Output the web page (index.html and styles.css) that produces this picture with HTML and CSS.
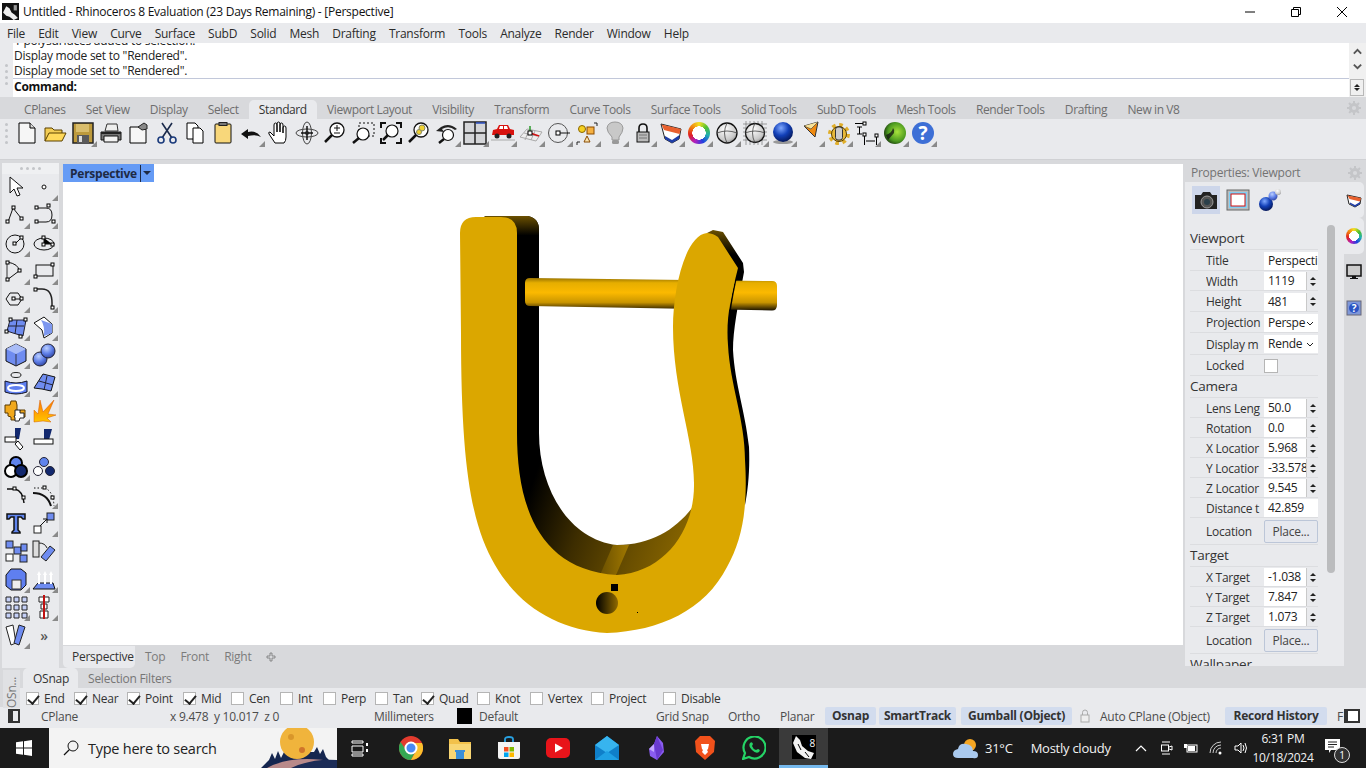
FILE: index.html
```html
<!DOCTYPE html>
<html lang="en">
  <head>
    <meta charset="UTF-8" />
    <title>Untitled - Rhinoceros 8</title>
    <link rel="stylesheet" href="styles.css">
  </head>
  <body>
    <svg class="defs">
      <defs>
        <linearGradient id="gPin" x1="0" y1="0" x2="0" y2="1">
          <stop offset="0" stop-color="#9a7400"/><stop offset=".15" stop-color="#e6ae00"/><stop offset=".45" stop-color="#fbb900"/><stop offset=".75" stop-color="#c99500"/><stop offset="1" stop-color="#1a1200"/>
        </linearGradient>
        <linearGradient id="gBack" gradientUnits="userSpaceOnUse" x1="530" y1="490" x2="690" y2="545">
          <stop offset="0" stop-color="#000"/><stop offset=".35" stop-color="#3d2d00"/><stop offset=".7" stop-color="#6a4f00"/><stop offset="1" stop-color="#8a6700"/>
        </linearGradient>
        <linearGradient id="gTop" x1="0" y1="0" x2="0" y2="1">
          <stop offset="0" stop-color="#6b5000"/><stop offset=".09" stop-color="#000"/><stop offset="1" stop-color="#000"/>
        </linearGradient>
        <linearGradient id="gHole" x1="0" y1="0" x2="1" y2="0">
          <stop offset="0" stop-color="#000"/><stop offset="1" stop-color="#8f6a00"/>
        </linearGradient>
        <linearGradient id="gStrip" x1="0" y1="0" x2="1" y2="0">
          <stop offset="0" stop-color="#6b5000"/><stop offset="1" stop-color="#a07800"/>
        </linearGradient>
        <radialGradient id="gBlue" cx=".4" cy=".3" r=".8">
          <stop offset="0" stop-color="#bcd0ff"/><stop offset=".5" stop-color="#5f7fe8"/><stop offset="1" stop-color="#26388f"/>
        </radialGradient>
        <radialGradient id="gGrey" cx=".4" cy=".3" r=".8">
          <stop offset="0" stop-color="#fff"/><stop offset=".7" stop-color="#c8c8c8"/><stop offset="1" stop-color="#777"/>
        </radialGradient>
        <radialGradient id="gDeep" cx=".4" cy=".3" r=".75">
          <stop offset="0" stop-color="#7fa8ff"/><stop offset=".5" stop-color="#1240b8"/><stop offset="1" stop-color="#04134f"/>
        </radialGradient>
        <radialGradient id="gGreen" cx=".6" cy=".45" r=".7">
          <stop offset="0" stop-color="#a8e23c"/><stop offset=".6" stop-color="#4c9a20"/><stop offset="1" stop-color="#0a1a08"/>
        </radialGradient>
        <linearGradient id="gFire" x1="0" y1="0" x2="0" y2="1">
          <stop offset="0" stop-color="#ff7a00"/><stop offset="1" stop-color="#ffc400"/>
        </linearGradient>
      </defs>
    </svg>

    <header class="titlebar">
      <svg class="app-icon" viewBox="0 0 16 16"><rect width="16" height="16" fill="#111"/><path d="M1 9l3-6 3 2 2 4 3 2 3 3-4 2-4-3-3-1z" fill="#eee"/><path d="M11 2h3v5h-3z" fill="#999"/></svg>
      <span class="title-text">Untitled - Rhinoceros 8 Evaluation (23 Days Remaining) - [Perspective]</span>
      <div class="win-btns">
        <svg viewBox="0 0 12 12"><path d="M1 6h10" stroke="#000"/></svg>
        <svg viewBox="0 0 12 12"><path d="M1.5 3.5h7v7h-7zM3.5 3.5v-2h7v7h-2" fill="none" stroke="#000"/></svg>
        <svg viewBox="0 0 12 12"><path d="M1 1l10 10M11 1L1 11" stroke="#000"/></svg>
      </div>
    </header>

    <nav class="menubar">
      <span>File</span><span>Edit</span><span>View</span><span>Curve</span><span>Surface</span><span>SubD</span><span>Solid</span><span>Mesh</span><span>Drafting</span><span>Transform</span><span>Tools</span><span>Analyze</span><span>Render</span><span>Window</span><span>Help</span>
    </nav>

    <section class="command">
      <div class="grip-v"><i></i><i></i><i></i><i></i></div>
      <div class="command-main">
        <div class="history">
          <p>1 polysurfaces added to selection.</p>
          <p>Display mode set to "Rendered".</p>
          <p>Display mode set to "Rendered".</p>
        </div>
        <div class="prompt">Command:</div>
      </div>
      <div class="command-scroll">
        <div class="scroll-up">
          <svg viewBox="0 0 12 30"><path d="M2 8l4-4 4 4M2 20l4 4 4-4" fill="none" stroke="#555" stroke-width="2"/></svg>
        </div>
        <div class="mini-spin"><i class="up"></i><i class="down"></i></div>
      </div>
    </section>

    <div class="tabrow">
      <span>CPlanes</span><span>Set View</span><span>Display</span><span>Select</span><span class="active">Standard</span><span>Viewport Layout</span><span>Visibility</span><span>Transform</span><span>Curve Tools</span><span>Surface Tools</span><span>Solid Tools</span><span>SubD Tools</span><span>Mesh Tools</span><span>Render Tools</span><span>Drafting</span><span>New in V8</span>
      <svg class="gear" viewBox="0 0 14 14"><circle cx="7" cy="7" r="3.6" fill="none" stroke="#c4c5c8" stroke-width="3"/><path d="M7 0v14M0 7h14M2 2l10 10M12 2L2 12" stroke="#c4c5c8" stroke-width="2" stroke-dasharray="2.4 9.2"/></svg>
    </div>

    <div class="toolbar">
      <div class="grip-v tool-grip"><i></i><i></i><i></i><i></i></div>
      <div class="tool"><svg viewBox="0 0 24 24"><path d="M4 2h11l5 5v15H4z" fill="#f6f6f6" stroke="#000"/><path d="M15 2v5h5" fill="#ddd" stroke="#000"/></svg></div>
      <div class="tool"><svg viewBox="0 0 24 24"><path d="M2 20V7h7l2 2h8v3" fill="#f3cd55" stroke="#5a4100"/><path d="M2 20l4-8h17l-4 8z" fill="#ffd95a" stroke="#5a4100"/></svg></div>
      <div class="tool fly"><svg viewBox="0 0 24 24"><path d="M2 2h20v20H2z" fill="#bd9a3c" stroke="#222" stroke-width="1.5"/><rect x="5" y="3" width="13" height="8" fill="#d9bd6c"/><rect x="6" y="14" width="12" height="8" fill="#5a5a5a"/><rect x="8" y="15" width="3" height="6" fill="#ddd"/></svg></div>
      <div class="tool"><svg viewBox="0 0 24 24"><path d="M6 10l2-7h10l1 7z" fill="#eee" stroke="#333"/><path d="M2 11h20v8H2z" fill="#777" stroke="#111"/><path d="M5 15h14v6H5z" fill="#f2f2f2" stroke="#111"/><path d="M2 12h20" stroke="#222" stroke-width="2"/></svg></div>
      <div class="tool"><svg viewBox="0 0 24 24"><path d="M3 6h13l3 3v13H3z" fill="#f6f6f6" stroke="#000"/><path d="M11 6l6-4 3 2v4l-5 1z" fill="#888" stroke="#222"/></svg></div>
      <div class="tool"><svg viewBox="0 0 24 24"><path d="M7 2l10 15M17 2L7 17" stroke="#1b2b4c" stroke-width="1.6"/><circle cx="6" cy="19" r="3" fill="none" stroke="#1b3b7c" stroke-width="1.6"/><circle cx="18" cy="19" r="3" fill="none" stroke="#1b3b7c" stroke-width="1.6"/></svg></div>
      <div class="tool"><svg viewBox="0 0 24 24"><path d="M4 2h8l3 3v13H4z" fill="#fff" stroke="#000"/><path d="M10 7h7l3 3v12H10z" fill="#fff" stroke="#000"/></svg></div>
      <div class="tool"><svg viewBox="0 0 24 24"><path d="M5 3h14q1 0 1 1v17q0 1-1 1H5q-1 0-1-1V4q0-1 1-1z" fill="#f8d77a" stroke="#111"/><rect x="8" y="1.5" width="8" height="3" fill="#777" stroke="#222"/></svg></div>
      <div class="tool fly"><svg viewBox="0 0 24 24"><path d="M2 13l7-5v3q8-2 13 5q-5-3-13-1v3z" fill="#111"/></svg></div>
      <div class="tool"><svg viewBox="0 0 24 24"><path d="M8 22l-6-9q-1-2 1-2l4 4V4q0-2 1.5-2T10 4v7-8q0-2 1.5-2T13 3v8-7q0-2 1.5-2T16 4v8-5q0-2 1.5-2T19 7v9q0 4-2 6z" fill="#fff" stroke="#000"/></svg></div>
      <div class="tool"><svg viewBox="0 0 24 24"><ellipse cx="12" cy="12" rx="11" ry="4" fill="none" stroke="#444"/><ellipse cx="12" cy="12" rx="4.5" ry="11" fill="none" stroke="#444"/><path d="M12 5v14M6 12h12" stroke="#111" stroke-width="1.5"/><circle cx="12" cy="12" r="2" fill="#222"/></svg></div>
      <div class="tool"><svg viewBox="0 0 24 24"><circle cx="14" cy="9" r="7" fill="#fff" stroke="#111" stroke-width="1.3"/><path d="M9 14l-7 7" stroke="#111" stroke-width="2.5"/><path d="M11 7h6M14 4v6M11 12h6" stroke="#111"/></svg></div>
      <div class="tool"><svg viewBox="0 0 24 24"><rect x="8" y="2" width="15" height="13" fill="none" stroke="#111" stroke-dasharray="2 2"/><circle cx="12" cy="13" r="6" fill="#fff" stroke="#111" stroke-width="1.2"/><path d="M8 17l-6 5" stroke="#111" stroke-width="2.5"/></svg></div>
      <div class="tool"><svg viewBox="0 0 24 24"><path d="M2 7V2h5M17 2h5v5M22 17v5h-5M7 22H2v-5" fill="none" stroke="#111" stroke-width="2"/><circle cx="13" cy="10" r="6" fill="#fff" stroke="#111" stroke-width="1.2"/><path d="M9 14l-5 5" stroke="#111" stroke-width="2.5"/></svg></div>
      <div class="tool"><svg viewBox="0 0 24 24"><circle cx="14" cy="9" r="7" fill="#fff" stroke="#111" stroke-width="1.3"/><circle cx="15" cy="7" r="3" fill="#f0d230" stroke="#886"/><circle cx="12" cy="11" r="2.5" fill="#f0d230" stroke="#886"/><path d="M9 14l-7 7" stroke="#111" stroke-width="2.5"/></svg></div>
      <div class="tool fly"><svg viewBox="0 0 24 24"><path d="M1 10l5-4q8-5 16 2l-2 1q-6-5-13-1l2 3z" fill="#222"/><circle cx="13" cy="14" r="5.5" fill="#fff" stroke="#111" stroke-width="1.2"/><path d="M9 18l-5 4" stroke="#111" stroke-width="2.5"/></svg></div>
      <div class="tool fly"><svg viewBox="0 0 24 24"><rect x="1" y="1" width="22" height="22" fill="#d4d5d8" stroke="#222" stroke-width="1.5"/><path d="M1 12h22M12 1v22" stroke="#222" stroke-width="1.5"/><path d="M13 2h9" stroke="#2a4cc0" stroke-width="1.5"/></svg></div>
      <div class="tool fly"><svg viewBox="0 0 24 24"><path d="M1 14l1-5 4-1 2-4h9l2 4 4 1v5z" fill="#d8120e"/><path d="M9 5h3v3H8zM13 5h3l1 3h-4z" fill="#fff"/><circle cx="6" cy="15" r="2.5" fill="#222"/><circle cx="18" cy="15" r="2.5" fill="#222"/><path d="M0 19h24" stroke="#aaa"/></svg></div>
      <div class="tool fly"><svg viewBox="0 0 24 24"><path d="M1 16L8 8l15 3-6 9z" fill="#eee" stroke="#aaa"/><path d="M5 12l13 3M10 9l-4 10M16 10l-4 9" stroke="#aaa"/><path d="M11 12V5" stroke="#2a9a2a" stroke-width="1.5"/><path d="M11 12l9 3" stroke="#d01010" stroke-width="1.5"/><rect x="9" y="10" width="4" height="4" fill="#fff" stroke="#000"/></svg></div>
      <div class="tool fly"><svg viewBox="0 0 24 24"><circle cx="11" cy="12" r="9.5" fill="none" stroke="#555"/><path d="M12 12h11" stroke="#111"/><rect x="9" y="10" width="4" height="4" fill="#fff" stroke="#000"/></svg></div>
      <div class="tool fly"><svg viewBox="0 0 24 24"><circle cx="7" cy="8" r="3.5" fill="#f5d020" stroke="#8a6500"/><rect x="12" y="6" width="7" height="7" fill="#f5b040" stroke="#8a4a00"/><path d="M9 21l3-6 3 6z" fill="#f9e3b0" stroke="#8a4a00"/><path d="M19 2h3v3M2 24v-3h3" fill="none" stroke="#222"/></svg></div>
      <div class="tool fly"><svg viewBox="0 0 24 24"><path d="M12 1q7 0 8 6 0 4-4 9v3H9v-3Q4 11 4 7q1-6 8-6z" fill="#c8c8c8" stroke="#999"/><rect x="9" y="19" width="7" height="4" rx="1.5" fill="#999"/></svg></div>
      <div class="tool fly"><svg viewBox="0 0 24 24"><path d="M8 11V7q0-4 4-4t4 4v4" fill="none" stroke="#111" stroke-width="1.6"/><rect x="6" y="11" width="12" height="10" fill="#bbb" stroke="#111"/><path d="M8 14h8M8 17h8" stroke="#777"/></svg></div>
      <div class="tool fly"><svg viewBox="0 0 24 24"><path d="M2 3l20 5-2 10-7 4-7-4z" fill="#fff" stroke="#222"/><path d="M2.500 3.500L22 8l-1.500 5L5 9z" fill="#e8602e"/><path d="M6 15l7 4 7.500-5-.5 4-7 4-7-4z" fill="#1f3ea8"/></svg></div>
      <div class="tool fly"><span class="wheel"></span></div>
      <div class="tool fly"><svg viewBox="0 0 24 24"><circle cx="12" cy="12" r="10" fill="url(#gGrey)" stroke="#111" stroke-width="1.3"/><path d="M12 2q-5 10 0 20M2 12q10-4 20 0" fill="none" stroke="#444" stroke-width=".8"/></svg></div>
      <div class="tool fly"><svg viewBox="0 0 24 24"><path d="M0 3h24M0 7h24M0 11h24M0 15h24M0 19h24M3 0v24M7 0v24M11 0v24M15 0v24M19 0v24" stroke="#666" stroke-width=".6"/><circle cx="12" cy="12" r="9.5" fill="url(#gGrey)" stroke="#111" stroke-width="1.3"/><path d="M12 2q-5 10 0 20M2 12q10-4 20 0" fill="none" stroke="#444" stroke-width=".8"/></svg></div>
      <div class="tool fly"><svg viewBox="0 0 24 24"><ellipse cx="12" cy="21" rx="10" ry="2" fill="#999"/><circle cx="12" cy="11" r="10" fill="url(#gDeep)"/></svg></div>
      <div class="tool fly"><svg viewBox="0 0 24 24"><path d="M5 5l14-4-3 15z" fill="#f08a10" stroke="#333"/><path d="M5 5l7 3 7-7" fill="#f7e39a" stroke="#333" stroke-width=".6"/></svg></div>
      <div class="tool fly"><svg viewBox="0 0 24 24"><circle cx="12" cy="13" r="9" fill="none" stroke="#e0ae2a" stroke-width="4" stroke-dasharray="3.500 3.560"/><circle cx="12" cy="13" r="7.500" fill="#e8b93a" stroke="#5a4100"/><rect x="8.500" y="6" width="7" height="13" rx="2.500" fill="#ccc" stroke="#333"/></svg></div>
      <div class="tool fly"><svg viewBox="0 0 24 24"><rect x="8" y="1" width="3" height="3" fill="#fff" stroke="#000"/><path d="M0 2.5h8M2 6h5M4.5 6v7M2 13h5" stroke="#000"/><rect x="8" y="12" width="3" height="3" fill="#fff" stroke="#000"/><rect x="20" y="13" width="3" height="3" fill="#fff" stroke="#000"/><path d="M9.500 15v9M21.500 16v8M11 20h9" stroke="#000"/></svg></div>
      <div class="tool fly"><svg viewBox="0 0 24 24"><circle cx="12" cy="12" r="11" fill="url(#gGreen)"/><path d="M3 14q6-2 7-7 2 2 1 5l-6 7z" fill="#111" opacity=".75"/></svg></div>
      <div class="tool fly"><svg viewBox="0 0 24 24"><circle cx="12" cy="12" r="11" fill="#3d6fd6"/><text x="12" y="19" class="help-q">?</text></svg></div>
    </div>

    <main class="main">
      <aside class="lefttools">
        <div class="grip-h"><i></i><i></i><i></i><i></i></div>
        <div class="left-grid">
          <div class="tool"><svg viewBox="0 0 24 24"><path d="M6 2v16l4-4 3 7 3-1-3-7h6z" fill="#fff" stroke="#111"/></svg></div>
          <div class="tool fly"><svg viewBox="0 0 24 24"><circle cx="12" cy="12" r="2" fill="#fff" stroke="#111"/></svg></div>
          <div class="tool fly"><svg viewBox="0 0 24 24"><path d="M4 19L9 5l8 10" fill="none" stroke="#111"/><rect x="2" y="17" width="3" height="3" fill="#fff" stroke="#000"/><rect x="8" y="3" width="3" height="3" fill="#fff" stroke="#000"/><rect x="16" y="14" width="3" height="3" fill="#fff" stroke="#000"/></svg></div>
          <div class="tool fly"><svg viewBox="0 0 24 24"><path d="M5 5h9q6 0 6 7t-6 7H5" fill="none" stroke="#111"/><rect x="3" y="3" width="3" height="3" fill="#fff" stroke="#000"/><rect x="3" y="17" width="3" height="3" fill="#fff" stroke="#000"/><rect x="15" y="1" width="3" height="3" fill="#fff" stroke="#000"/><rect x="20" y="17" width="3" height="3" fill="#fff" stroke="#000"/></svg></div>
          <div class="tool fly"><svg viewBox="0 0 24 24"><circle cx="11" cy="13" r="9" fill="none" stroke="#111"/><path d="M11 13l6-6" stroke="#111"/><rect x="9" y="11" width="3" height="3" fill="#fff" stroke="#000"/><rect x="16" y="5" width="3" height="3" fill="#fff" stroke="#000"/></svg></div>
          <div class="tool fly"><svg viewBox="0 0 24 24"><ellipse cx="12" cy="13" rx="10" ry="6" fill="none" stroke="#111"/><path d="M12 7v6h8" stroke="#111"/><rect x="10" y="5" width="3" height="3" fill="#fff" stroke="#000"/><rect x="10" y="12" width="3" height="3" fill="#fff" stroke="#000"/><rect x="19" y="12" width="3" height="3" fill="#fff" stroke="#000"/></svg></div>
          <div class="tool fly"><svg viewBox="0 0 24 24"><path d="M3 3v18" stroke="#333"/><path d="M3 3q12 2 12 9L3 21" fill="none" stroke="#111"/><rect x="2" y="2" width="3" height="3" fill="#fff" stroke="#000"/><rect x="14" y="10" width="3" height="3" fill="#fff" stroke="#000"/><rect x="2" y="19" width="3" height="3" fill="#fff" stroke="#000"/></svg></div>
          <div class="tool fly"><svg viewBox="0 0 24 24"><rect x="4" y="6" width="17" height="11" fill="none" stroke="#111"/><rect x="2" y="16" width="3" height="3" fill="#fff" stroke="#000"/><rect x="19" y="4" width="3" height="3" fill="#fff" stroke="#000"/></svg></div>
          <div class="tool fly"><svg viewBox="0 0 24 24"><path d="M2 12l4-6h8l4 6-4 6H6z" fill="none" stroke="#111"/><path d="M10 12h9" stroke="#111"/><rect x="8" y="10" width="3" height="3" fill="#fff" stroke="#000"/><rect x="16" y="10" width="3" height="3" fill="#fff" stroke="#000"/></svg></div>
          <div class="tool fly"><svg viewBox="0 0 24 24"><path d="M4 2h6q10 0 10 14v4" fill="none" stroke="#222" stroke-width="1.5"/><rect x="2" y="1" width="3" height="3" fill="#fff" stroke="#000"/><rect x="19" y="19" width="3" height="3" fill="#fff" stroke="#000"/></svg></div>
          <div class="tool fly"><svg viewBox="0 0 24 24"><path d="M6 5h16l-3 16-10-3L3 16z" fill="#6f8cf0" stroke="#223"/><path d="M13 5l-2 14M4 11h16" stroke="#223"/><rect x="5" y="3" width="3" height="3" fill="#fff" stroke="#000"/><rect x="20" y="3" width="3" height="3" fill="#fff" stroke="#000"/><rect x="1" y="15" width="3" height="3" fill="#fff" stroke="#000"/><rect x="15" y="20" width="3" height="3" fill="#fff" stroke="#000"/></svg></div>
          <div class="tool fly"><svg viewBox="0 0 24 24"><path d="M2 8l10-6 8 7v9l-8 5-2-8z" fill="#fff" stroke="#111"/><path d="M9 5l11 4v9l-8 3q1-10-3-16z" fill="#7d97ef"/></svg></div>
          <div class="tool fly"><svg viewBox="0 0 24 24"><path d="M12 1l10 5v12l-10 5-10-5V6z" fill="#6f8cf0" stroke="#111"/><path d="M2 6l10 5 10-5-10-5z" fill="#a9bcf7"/><path d="M12 11v12" stroke="#334"/></svg></div>
          <div class="tool fly"><svg viewBox="0 0 24 24"><circle cx="8" cy="16" r="7" fill="url(#gBlue)" stroke="#223"/><circle cx="16" cy="8" r="7" fill="url(#gBlue)" stroke="#223"/></svg></div>
          <div class="tool fly"><svg viewBox="0 0 24 24"><ellipse cx="12" cy="4" rx="5" ry="2.5" fill="none" stroke="#222"/><path d="M1 10q11 4 22 0v11q-11 4-22 0z" fill="#5f7ff0" stroke="#112"/><ellipse cx="12" cy="17" rx="8" ry="3" fill="#5f7ff0" stroke="#fff" stroke-width="2"/></svg></div>
          <div class="tool fly"><svg viewBox="0 0 24 24"><path d="M2 17L11 3l12 3-4 14-9-2z" fill="#6f8cf0" stroke="#111"/><path d="M7 10l14 4M15 5L12 19" stroke="#223"/></svg></div>
          <div class="tool fly"><svg viewBox="0 0 24 24"><path d="M1 6h5l1-4h5l1 4v5l3 1v-1h5v7h-7l-1 3h-6v-3l-3-1v-3H1z" fill="#f1a81b" stroke="#5a3b00"/><path d="M11 11h5v3h4v5h-4l-1 3h-4v-3l-1-2h1z" fill="#fff" stroke="#222"/></svg></div>
          <div class="tool"><svg viewBox="0 0 24 24"><path d="M2 23V11l4 4 2-14 3 12 11-12-6 14 8 1-9 3 4 4-8-1z" fill="url(#gFire)" stroke="#d45a00" stroke-width=".5"/></svg></div>
          <div class="tool"><svg viewBox="0 0 24 24"><path d="M11 1h6l-2 11h-4z" fill="#12286e"/><rect x="1" y="10" width="11" height="5" fill="#fff" stroke="#111"/><path d="M14 14l5 6-3 3-5-6z" fill="#fff" stroke="#111"/></svg></div>
          <div class="tool"><svg viewBox="0 0 24 24"><path d="M12 2h8l-3 11h-5z" fill="#12286e"/><rect x="2" y="12" width="19" height="5" fill="#fff" stroke="#111"/></svg></div>
          <div class="tool fly"><svg viewBox="0 0 24 24"><circle cx="12" cy="8" r="6" fill="#5f84ee" stroke="#000" stroke-width="2"/><circle cx="7" cy="16" r="6" fill="#fff" stroke="#000" stroke-width="2"/><circle cx="17" cy="16" r="6" fill="#12286e" stroke="#000" stroke-width="2"/></svg></div>
          <div class="tool"><svg viewBox="0 0 24 24"><circle cx="12" cy="7" r="4.5" fill="#5f84ee" stroke="#223"/><circle cx="6" cy="16" r="4.5" fill="#fff" stroke="#223"/><circle cx="18" cy="16" r="4.5" fill="#12286e" stroke="#223"/></svg></div>
          <div class="tool"><svg viewBox="0 0 24 24"><path d="M3 6h8q8 2 9 14" fill="none" stroke="#111" stroke-width="1.5"/><rect x="9" y="4" width="3" height="3" fill="#fff" stroke="#000"/><rect x="18" y="13" width="3" height="3" fill="#fff" stroke="#000"/></svg></div>
          <div class="tool fly"><svg viewBox="0 0 24 24"><path d="M1 10q14 0 18 13" fill="none" stroke="#111" stroke-width="2"/><path d="M2 5h10q9 2 10 18" fill="none" stroke="#111" stroke-dasharray="1.5 2"/><rect x="11" y="3" width="3" height="3" fill="#fff" stroke="#000"/><rect x="19" y="13" width="3" height="3" fill="#fff" stroke="#000"/></svg></div>
          <div class="tool"><svg viewBox="0 0 24 24"><path d="M3 3h18v5h-2l-2-2h-3v13l2 2v1H8v-1l2-2V6H7L5 8H3z" fill="#5f84ee" stroke="#111" stroke-width="1.5"/></svg></div>
          <div class="tool fly"><svg viewBox="0 0 24 24"><rect x="2" y="15" width="7" height="7" fill="#fff" stroke="#222"/><rect x="15" y="2" width="7" height="7" fill="#6f8cf0" stroke="#222"/><path d="M8 15l7-7M11 8h4v4" fill="none" stroke="#111"/></svg></div>
          <div class="tool"><svg viewBox="0 0 24 24"><rect x="2" y="2" width="7" height="7" fill="#6f8cf0" stroke="#222"/><rect x="10" y="8" width="7" height="7" fill="#6f8cf0" stroke="#222"/><rect x="17" y="5" width="6" height="7" fill="#6f8cf0" stroke="#222"/><rect x="2" y="15" width="7" height="7" fill="#fff" stroke="#222"/><rect x="16" y="16" width="7" height="7" fill="#6f8cf0" stroke="#222"/></svg></div>
          <div class="tool"><svg viewBox="0 0 24 24"><rect x="1" y="2" width="6" height="16" fill="#ddd" stroke="#222"/><path d="M14 22l-5-4 9-11 5 4z" fill="#6f8cf0" stroke="#222"/><path d="M7 4q6 0 8 5" fill="none" stroke="#222"/></svg></div>
          <div class="tool fly"><svg viewBox="0 0 24 24"><path d="M2 8l5-6h10l5 4v12l-5 5H7l-5-4z" fill="#5f7ff0" stroke="#111"/><rect x="8" y="13" width="9" height="9" fill="#eee" stroke="#333"/></svg></div>
          <div class="tool fly"><svg viewBox="0 0 24 24"><path d="M6 16h15l2 6H1z" fill="#6f8cf0" stroke="#111"/><path d="M7 17V6M13 17V6M19 17V6" stroke="#fff" stroke-width="2"/><path d="M5 8l2-4 2 4M11 8l2-4 2 4M17 8l2-4 2 4" fill="#fff"/></svg></div>
          <div class="tool fly"><svg viewBox="0 0 24 24"><path d="M2 2h5v5H2zM10 2h5v5h-5zM18 2h5v5h-5zM2 10h5v5H2zM10 10h5v5h-5zM18 10h5v5h-5zM2 18h5v5H2zM10 18h5v5h-5zM18 18h5v5h-5z" fill="#c5d0f7" stroke="#222"/></svg></div>
          <div class="tool fly"><svg viewBox="0 0 24 24"><path d="M7 2h10v5H7zM9 9h6v5H9zM8 16h8v7H8z" fill="#fff" stroke="#222"/><path d="M12 0v24" stroke="#c01010" stroke-width="2"/></svg></div>
          <div class="tool fly"><svg viewBox="0 0 24 24"><path d="M2 4l7-2 3 18-5 2z" fill="#fff" stroke="#222"/><path d="M10 20l5-18 6 2-6 18z" fill="#6f8cf0" stroke="#222"/></svg></div>
          <div class="tool more">&raquo;</div>
        </div>
      </aside>

      <div class="centre">
        <div class="viewport">
          <div class="vp-label"><span>Perspective</span><i></i></div>
          <svg class="model" viewBox="63 164 1120 481">
            <path d="M484 216H528Q539 218 539 230V433C539 490 570 540 617 545 650 545 675 530 692 508L690 560 600 590 500 540 500 433 517 232z" fill="url(#gBack)"/>
            <path d="M484 216H528Q539 218 539 230V433H510V232z" fill="url(#gTop)"/>
            <path d="M613 545h16l-13 30h-16z" fill="url(#gStrip)"/>
            <path d="M707 233L713 230 723 232 743 263 744 272C738 305 733 330 733 350 735 385 745 410 749 447 750 470 748 490 745 505L700 400z" fill="url(#gTop)"/>
            <path d="M530 278L772 281Q777 281 777 286V305Q777 310.500 772 310.500L530 306Q525 306 525 301V283Q525 278 530 278z" fill="url(#gPin)"/>
            <path d="M738 268C735 285 731 298 729 320" fill="none" stroke="#000" stroke-width="1.5"/>
            <path d="M460 233Q460 217 476 217H501Q517 217 517 233V433C517 500 535 570 617 575 665 572 695 530 694 483 694 440 673 390 673 327 673 290 685 235 707 233 713 233 718 237 718 237L738 268C730 300 726 320 728 345 730 385 745 420 745 460 748 510 742 540 727 567 705 610 660 631 607 633 560 630 520 608 495 565 472 525 461 470 461 333z" fill="#dba700"/>
            <circle cx="607" cy="603" r="11" fill="url(#gHole)"/>
            <rect x="611" y="584" width="7" height="7" fill="#000"/>
            <rect x="637" y="612" width="1" height="1" fill="#000"/>
          </svg>
        </div>
        <div class="vp-tabs">
          <span class="active">Perspective</span><span>Top</span><span>Front</span><span>Right</span>
          <svg viewBox="0 0 10 10"><path d="M4 1h2v3h3v2H6v3H4V6H1V4h3z" fill="#d8d9dc" stroke="#777" stroke-width=".8"/></svg>
        </div>
      </div>

      <section class="props">
        <div class="props-head">Properties: Viewport</div>
        <div class="props-icons">
          <div class="p-icon on"><svg viewBox="0 0 24 20"><path d="M1 5h6l2-3h7l2 3h5v14H1z" fill="#222"/><circle cx="13" cy="12" r="6" fill="#555" stroke="#999"/><circle cx="13" cy="12" r="3" fill="#2a3f4a"/></svg></div>
          <div class="p-icon"><svg viewBox="0 0 24 24"><rect x="1" y="2" width="22" height="20" fill="#bbb" stroke="#666"/><rect x="3" y="4" width="18" height="16" fill="#7fd0f5"/><rect x="5" y="6" width="14" height="12" fill="#fff" stroke="#d01010"/></svg></div>
          <div class="p-icon"><svg viewBox="0 0 24 24"><circle cx="8" cy="16" r="7" fill="url(#gDeep)"/><circle cx="15" cy="8" r="4.5" fill="url(#gBlue)"/><circle cx="20" cy="4" r="3" fill="url(#gGrey)"/></svg></div>
        </div>
        <div class="props-body">
          <div class="form">
            <h4>Viewport</h4>
            <div class="row h21"><label>Title</label><div class="val wide">Perspecti</div></div>
            <div class="row"><label>Width</label><div class="val">1119<span class="spin"><i class="up"></i><i class="down"></i></span></div></div>
            <div class="row h21"><label>Height</label><div class="val">481<span class="spin"><i class="up"></i><i class="down"></i></span></div></div>
            <div class="row h21"><label>Projection</label><div class="val wide">Perspe<svg class="caret" viewBox="0 0 8 5"><path d="M1 1l3 3 3-3" fill="none" stroke="#222"/></svg></div></div>
            <div class="row h22"><label>Display m</label><div class="val wide">Rende<svg class="caret" viewBox="0 0 8 5"><path d="M1 1l3 3 3-3" fill="none" stroke="#222"/></svg></div></div>
            <div class="row h21"><label>Locked</label><span class="check plain"></span></div>
            <h4 class="h22">Camera</h4>
            <div class="row"><label>Lens Leng</label><div class="val">50.0<span class="spin"><i class="up"></i><i class="down"></i></span></div></div>
            <div class="row"><label>Rotation</label><div class="val">0.0<span class="spin"><i class="up"></i><i class="down"></i></span></div></div>
            <div class="row"><label>X Locatior</label><div class="val">5.968<span class="spin"><i class="up"></i><i class="down"></i></span></div></div>
            <div class="row"><label>Y Locatior</label><div class="val">-33.578<span class="spin"><i class="up"></i><i class="down"></i></span></div></div>
            <div class="row"><label>Z Locatior</label><div class="val">9.545<span class="spin"><i class="up"></i><i class="down"></i></span></div></div>
            <div class="row"><label>Distance t</label><div class="val wide">42.859</div></div>
            <div class="row h27"><label>Location</label><button class="place">Place...</button></div>
            <h4 class="h22">Target</h4>
            <div class="row"><label>X Target</label><div class="val">-1.038<span class="spin"><i class="up"></i><i class="down"></i></span></div></div>
            <div class="row"><label>Y Target</label><div class="val">7.847<span class="spin"><i class="up"></i><i class="down"></i></span></div></div>
            <div class="row"><label>Z Target</label><div class="val">1.073<span class="spin"><i class="up"></i><i class="down"></i></span></div></div>
            <div class="row h27"><label>Location</label><button class="place">Place...</button></div>
            <h4 class="h22">Wallpaper</h4>
          </div>
          <div class="props-scroll"><i></i></div>
        </div>
      </section>

      <aside class="sidetabs">
        <div class="s-gear"><svg class="gear" viewBox="0 0 14 14"><circle cx="7" cy="7" r="3.6" fill="none" stroke="#c4c5c8" stroke-width="3"/><path d="M7 0v14M0 7h14M2 2l10 10M12 2L2 12" stroke="#c4c5c8" stroke-width="2" stroke-dasharray="2.4 9.2"/></svg></div>
        <div class="s-tab on"><svg viewBox="0 0 16 16"><path d="M1 3l14 3-1 6-5 3-6-3z" fill="#fff" stroke="#222"/><path d="M1.500 3.500L15 6l-1 3.500L3.500 7z" fill="#e8602e"/><path d="M4 10.500l5 2.500 5-3v2l-5 3-5-3z" fill="#1f3ea8"/></svg></div>
        <div class="s-tab on"><span class="wheel small"></span></div>
        <div class="s-tab"><svg viewBox="0 0 16 16"><rect x="1" y="1" width="14" height="11" fill="#ccc" stroke="#111" stroke-width="1.5"/><path d="M6 12h4v2h2v1H4v-1h2z" fill="#111"/></svg></div>
        <div class="s-tab"><svg viewBox="0 0 16 16"><rect x="1" y="1" width="14" height="14" fill="#7f97d8" stroke="#667"/><circle cx="8" cy="8" r="5" fill="#2c55c4"/><text x="8" y="11.5" class="help-q small">?</text></svg></div>
      </aside>
    </main>

    <section class="osnap">
      <div class="osnap-tabs">
        <span class="vert">OSn...</span>
        <span class="os-tab">OSnap</span>
        <span class="os-other">Selection Filters</span>
      </div>
      <div class="osnap-row">
        <label><i class="check on"></i>End</label>
        <label><i class="check on"></i>Near</label>
        <label><i class="check on"></i>Point</label>
        <label><i class="check on"></i>Mid</label>
        <label><i class="check"></i>Cen</label>
        <label><i class="check"></i>Int</label>
        <label><i class="check"></i>Perp</label>
        <label><i class="check"></i>Tan</label>
        <label><i class="check on"></i>Quad</label>
        <label><i class="check"></i>Knot</label>
        <label><i class="check"></i>Vertex</label>
        <label><i class="check"></i>Project</label>
        <label><i class="check"></i>Disable</label>
      </div>
    </section>

    <footer class="status">
      <svg class="st-square" viewBox="0 0 12 14"><rect x="1" y="1" width="10" height="12" fill="#e9eaed" stroke="#333" stroke-width="2"/><rect x="1" y="1" width="4" height="12" fill="#333"/></svg>
      <span class="st-cplane">CPlane</span>
      <span class="st-coords">x 9.478 &nbsp;y 10.017 &nbsp;z 0</span>
      <span class="st-units">Millimeters</span>
      <i class="st-swatch"></i>
      <span class="st-layer">Default</span>
      <span class="st-grid">Grid Snap</span>
      <span class="st-ortho">Ortho</span>
      <span class="st-planar">Planar</span>
      <b class="pill st-osnap">Osnap</b>
      <b class="pill st-smart">SmartTrack</b>
      <b class="pill st-gumball">Gumball (Object)</b>
      <svg class="st-lock" viewBox="0 0 10 14"><path d="M2.5 6V3.500q0-2.500 2.500-2.500t2.500 2.500V6" fill="none" stroke="#aaa"/><rect x="1" y="6" width="8" height="7" fill="#eee" stroke="#aaa"/></svg>
      <span class="st-auto">Auto CPlane (Object)</span>
      <b class="pill st-record">Record History</b>
      <span class="st-f">F</span>
      <svg class="st-end" viewBox="0 0 16 14"><rect x="1" y="1" width="14" height="12" fill="#fff" stroke="#333" stroke-width="2"/><rect x="1" y="1" width="3" height="12" fill="#333"/></svg>
    </footer>

    <div class="taskbar">
      <svg class="start" viewBox="0 0 16 16"><path d="M0 2.3l7-1v6.300H0zM8 1.200L16 0v7.600H8zM0 8.400h7v6.300l-7-1zM8 8.400h8V16l-8-1.200z" fill="#fff"/></svg>
      <div class="search">
        <svg viewBox="0 0 16 16"><circle cx="10" cy="6" r="5" fill="none" stroke="#111"/><path d="M6.500 9.500L1 15" stroke="#111" stroke-width="1.2"/></svg>
        <span>Type here to search</span>
        <svg class="moon" viewBox="0 0 76 40"><path d="M0 40L8 32l3-7 3 6 3-8 3 7 3-6 30 0 3-5 3 7 3-5 3 8 6 6v5z" fill="#15264f"/><circle cx="36" cy="14" r="17" fill="#f0b43c"/><circle cx="30" cy="9" r="3" fill="#d9962a"/><circle cx="41" cy="22" r="3" fill="#d0752a"/><path d="M6 40q25-14 70-6v6z" fill="#b98a8a"/><path d="M30 40q22-10 46-8v8z" fill="#1c2c57"/></svg>
      </div>
      <svg class="tb-icon taskview" viewBox="0 0 18 18"><path d="M1 2h11v2H1zM1 7h11v6H1zM1 15h11v2H1z" fill="none" stroke="#fff"/><path d="M15 4h2v3h-2zM15 10h2v3h-2z" fill="#fff"/></svg>
      <svg class="tb-icon" viewBox="0 0 24 24"><circle cx="12" cy="12" r="12" fill="#e33b2e"/><path d="M12 24a12 12 0 0 1-10.400-18L7 14l5 3 4-1z" fill="#35a853"/><path d="M23 7a12 12 0 0 1-11 17l5-9-1-8z" fill="#fbc02d"/><circle cx="12" cy="12" r="5.500" fill="#4a8af4" stroke="#fff" stroke-width="2"/></svg>
      <svg class="tb-icon" viewBox="0 0 24 24"><path d="M1 3h9l2 3h11v17H1z" fill="#f2c14b"/><path d="M1 8h22v15H1z" fill="#f8d674"/><path d="M8 23v-7h8v7zM7 16h10v-2H7z" fill="#3a8fd8"/></svg>
      <svg class="tb-icon" viewBox="0 0 24 24"><path d="M1 6h22v15q0 2-2 2H3q-2 0-2-2z" fill="#f4f4f4"/><path d="M8 6V3q0-2 4-2t4 2v3" fill="none" stroke="#28a0e0" stroke-width="1.8"/><path d="M7 11h4.500v4.500H7z" fill="#f25022"/><path d="M12.500 11H17v4.500h-4.500z" fill="#7fba00"/><path d="M7 16.500h4.500V21H7z" fill="#00a4ef"/><path d="M12.500 16.500H17V21h-4.500z" fill="#ffb900"/></svg>
      <svg class="tb-icon" viewBox="0 0 24 24"><rect y="2" width="24" height="20" rx="5" fill="#e8141a"/><path d="M9 7.500l8 4.500-8 4.500z" fill="#fff"/></svg>
      <svg class="tb-icon" viewBox="0 0 24 24"><path d="M0 9l12-9 12 9v15H0z" fill="#0f7fc9"/><path d="M0 9l12 8 12-8v0L12 0z" fill="#37b4ef"/><path d="M0 24l12-9 12 9z" fill="#1fa0e4"/></svg>
      <svg class="tb-icon" viewBox="0 0 24 24"><path d="M13 0l6 7 1 9-7 8-7-4-1-7 5-5z" fill="#8a5cf0"/><path d="M13 0l-3 8 3 16 6-10z" fill="#6a3ad0"/><path d="M10 8l-5 5 5 3z" fill="#c3a6ff"/></svg>
      <svg class="tb-icon" viewBox="0 0 24 24"><path d="M7 0h10l5 5-1 11-9 8-9-8L2 5z" fill="#f1511b"/><path d="M8 8h8l-1 5-1 1 1 2-3 3-3-3 1-2-1-1z" fill="#fff"/></svg>
      <svg class="tb-icon" viewBox="0 0 24 24"><path d="M1 23l2-6a11 11 0 1 1 4 4z" fill="none" stroke="#25d366" stroke-width="2.2"/><path d="M8 7q2-2 3 1l-1 2q1 3 4 4l2-1q3 1 1 3-3 2-7-2t-2-7z" fill="#25d366"/></svg>
      <div class="rhino-btn">
        <svg viewBox="0 0 24 24"><rect width="24" height="24" fill="#000"/><path d="M1 8l3-7 4 4 2 6 6 5 6 2-3 6-6-1-8-6z" fill="#f2f2f2"/><path d="M6 9l3 6M13 17l4 5" stroke="#000"/></svg>
        <em>8</em>
      </div>
      <div class="weather">
        <svg viewBox="0 0 26 22"><circle cx="17" cy="8" r="6" fill="#f5a623"/><path d="M5 21q-5 0-5-4t5-5q1-6 8-5t7 7q5 0 5 4t-5 3z" fill="#a9c9ee"/></svg>
        <span class="temp">31°C</span><span class="cond">Mostly cloudy</span>
      </div>
      <div class="tray">
        <svg viewBox="0 0 14 14"><path d="M2 10l5-5 5 5" fill="none" stroke="#fff" stroke-width="1.2"/></svg>
        <svg viewBox="0 0 14 14"><path d="M3 1h8M3 13h8" stroke="#fff"/><rect x="2.5" y="4" width="7" height="6" fill="none" stroke="#fff"/><path d="M10 6l3-1v4l-3-1" fill="none" stroke="#fff"/></svg>
        <svg viewBox="0 0 14 14"><rect x="3" y="4" width="10" height="7" fill="none" stroke="#fff"/><rect x="4" y="5" width="7" height="5" fill="#fff"/><path d="M0 3h3v4H0z" fill="#fff"/></svg>
        <svg viewBox="0 0 14 14"><path d="M1 12a11 11 0 0 1 11-11M4 12a8 8 0 0 1 8-8M7 12a5 5 0 0 1 5-5" fill="none" stroke="#ccc"/><circle cx="11" cy="12" r="1.5" fill="#fff"/></svg>
        <svg viewBox="0 0 14 14"><path d="M1 5h3l3-3v10L4 9H1z" fill="none" stroke="#fff"/><path d="M9 4q2 3 0 6M11 2q3 5 0 10" fill="none" stroke="#fff"/></svg>
      </div>
      <div class="clock"><span>6:31 PM</span><span>10/18/2024</span></div>
      <div class="notify">
        <svg viewBox="0 0 18 18"><path d="M1 1h15v11H7l-2 3v-3H1z" fill="#fff"/><path d="M4 4h9M4 6.500h9M4 9h6" stroke="#222"/></svg>
        <b>1</b>
      </div>
    </div>
  </body>
</html>
```
FILE: styles.css
```css
* {
  box-sizing: border-box;
}
html,
body {
  margin: 0;
  padding: 0;
}
body {
  width: 1366px;
  height: 768px;
  overflow: hidden;
  background-color: #d8d9dc;
  color: #2b2b2b;
  font-family: "Open Sans", "Noto Sans", sans-serif;
  font-size: 12px;
  letter-spacing: -0.25px;
}
i,
em {
  font-style: normal;
}
.defs {
  position: absolute;
  width: 0;
  height: 0;
}

/* title + menu */
.titlebar {
  display: flex;
  align-items: center;
  height: 23px;
  background-color: #fff;
  color: #111;
  padding-left: 2px;
}
.app-icon {
  width: 17px;
  height: 17px;
  margin-right: 4px;
}
.win-btns {
  display: flex;
  margin-left: auto;
  gap: 34px;
  padding-right: 18px;
}
.win-btns svg {
  width: 12px;
  height: 12px;
}
.menubar {
  display: flex;
  align-items: center;
  gap: 13.2px;
  height: 20px;
  padding-left: 7px;
  background-color: #e9eaed;
}

/* command area */
.command {
  display: flex;
  height: 54px;
  background-color: #e9eaed;
}
.grip-v {
  display: flex;
  flex-direction: column;
  justify-content: center;
  gap: 3px;
  width: 13px;
  padding-left: 5px;
}
.grip-v i,
.grip-h i {
  width: 3px;
  height: 3px;
  border-radius: 50%;
  background-color: #c3c5c9;
}
.command .grip-v {
  padding-top: 8px;
}
.command-main {
  flex: 1;
  display: flex;
  flex-direction: column;
  background-color: #fff;
}
.history {
  height: 36px;
  overflow: hidden;
  color: #222;
  border-bottom: 1px solid #c2c8da;
  padding-left: 1px;
}
.history p {
  margin: 0;
  line-height: 15px;
}
.history p:first-child {
  margin-top: -10px;
}
.prompt {
  height: 18px;
  line-height: 16px;
  font-weight: 700;
  color: #111;
  padding-left: 1px;
}
.command-scroll {
  width: 17px;
  display: flex;
  flex-direction: column;
  background-color: #f0f0f0;
}
.scroll-up {
  height: 36px;
  padding: 3px 3px 0;
}
.scroll-up svg {
  display: block;
  width: 11px;
  height: 28px;
}
.mini-spin {
  display: flex;
  flex-direction: column;
  gap: 1px;
  width: 14px;
  height: 17px;
  margin-left: 1px;
  border: 1px solid #b8b8b8;
  align-items: center;
  justify-content: center;
}
.up {
  width: 0;
  height: 0;
  border: 3px solid transparent;
  border-top: 0;
  border-bottom: 3px solid #222;
}
.down {
  width: 0;
  height: 0;
  border: 3px solid transparent;
  border-bottom: 0;
  border-top: 3px solid #222;
}

/* tab strip + toolbar */
.tabrow {
  display: flex;
  align-items: center;
  height: 22px;
  gap: 20.3px;
  padding: 3px 0 0 24px;
  color: #6e6e6e;
  letter-spacing: -0.4px;
  position: relative;
}
.tabrow .active {
  background-color: #e9eaed;
  color: #333;
  margin: 0 -10px;
  padding: 0 10px;
  height: 19px;
  line-height: 20px;
  border-radius: 5px 5px 0 0;
}
.gear {
  width: 14px;
  height: 14px;
}
.tabrow .gear {
  position: absolute;
  right: 5px;
  top: 4px;
}
.toolbar {
  display: flex;
  height: 41px;
  background-color: #e9eaed;
  border-bottom: 1px solid #d0d1d4;
}
.tool-grip {
  width: 13px;
  height: 28px;
}
.tool {
  position: relative;
  display: flex;
  align-items: center;
  justify-content: center;
  width: 28px;
  height: 28px;
  flex: none;
}
.tool svg {
  width: 24px;
  height: 24px;
}
.fly::after {
  content: "";
  position: absolute;
  right: 0;
  bottom: 0;
  border: 3px solid transparent;
  border-right-color: #8a8a8a;
  border-bottom-color: #8a8a8a;
}
.wheel {
  width: 22px;
  height: 22px;
  border-radius: 50%;
  background: radial-gradient(circle, #fff 0 42%, transparent 44%),
    conic-gradient(#f5e020, #50c030, #20b0b0, #2040e0, #b020c0, #e02020, #f08010, #f5e020);
}
.wheel.small {
  width: 16px;
  height: 16px;
}
.help-q {
  font-size: 19px;
  font-weight: 700;
  fill: #fff;
  text-anchor: middle;
}
.help-q.small {
  font-size: 10px;
}

/* main row */
.main {
  display: flex;
  height: 508px;
  padding-top: 3px;
}
.lefttools {
  width: 57px;
  margin-left: 2px;
  background-color: #e9eaed;
  border-radius: 4px 4px 0 0;
}
.grip-h {
  display: flex;
  justify-content: center;
  gap: 3px;
  height: 11px;
  padding-top: 4px;
  background-color: #eff0f2;
}
.left-grid {
  display: grid;
  grid-template-columns: 28px 28px;
  grid-auto-rows: 28px;
  margin-top: -1px;
}
.more {
  color: #555;
  font-size: 14px;
  font-weight: 600;
}
.centre {
  width: 1120px;
  margin-left: 4px;
  margin-top: 1px;
}
.viewport {
  position: relative;
  height: 481px;
  background-color: #fff;
}
.vp-label {
  position: absolute;
  left: 0;
  top: 0;
  display: flex;
  align-items: center;
  width: 91px;
  height: 18px;
  padding-left: 7px;
  background-color: #659bf5;
  color: #1e2a44;
  font-weight: 700;
}
.vp-label i {
  margin-left: auto;
  margin-right: 3px;
  border: 4px solid transparent;
  border-bottom: 0;
  border-top: 4px solid #1e2a44;
}
.vp-label span {
  border-right: 1px solid #1e2a44;
  padding-right: 3px;
}
.model {
  display: block;
  width: 1120px;
  height: 481px;
}
.vp-tabs {
  display: flex;
  align-items: center;
  gap: 15px;
  height: 23px;
  color: #7b7b7b;
}
.vp-tabs .active {
  background-color: #e9eaed;
  color: #333;
  padding: 0 2px 0 9px;
  margin-right: -5px;
  height: 22px;
  line-height: 22px;
  width: 72px;
  border-radius: 0 0 5px 5px;
}
.vp-tabs svg {
  width: 10px;
  height: 10px;
}

/* properties */
.props {
  width: 159px;
  margin-left: 2px;
  margin-top: 1px;
  height: 502px;
  overflow: hidden;
}
.props-head {
  height: 18px;
  line-height: 18px;
  padding-left: 6px;
  color: #737373;
}
.props-icons {
  display: flex;
  gap: 4px;
  height: 43px;
  padding: 4px 0 0 7px;
  background-color: #e9eaed;
}
.p-icon {
  display: flex;
  align-items: center;
  justify-content: center;
  width: 28px;
  height: 28px;
}
.p-icon.on {
  background-color: #cdd6ea;
}
.p-icon svg {
  width: 24px;
  height: 24px;
}
.props-body {
  display: flex;
  background-color: #e9eaed;
  height: 441px;
  overflow: hidden;
}
.form {
  width: 133px;
  padding-left: 5px;
  flex: none;
}
h4 {
  margin: 3px 0 0;
  height: 22px;
  line-height: 20px;
  font-size: 13.5px;
  font-weight: 400;
  color: #333;
  border-bottom: 1px solid #dcdde0;
}
h4.h22 {
  margin: 0;
}
.row {
  display: flex;
  align-items: center;
  height: 20px;
  padding-left: 16px;
  padding-top: 1px;
  border-bottom: 1px solid #dcdde0;
  flex: none;
}
.row.h21 {
  height: 21px;
}
.row.h22 {
  height: 22px;
}
.row.h27 {
  height: 27px;
}
.row label {
  width: 58px;
  flex: none;
  overflow: hidden;
  white-space: nowrap;
  color: #333;
}
.val {
  position: relative;
  width: 54px;
  height: 18px;
  line-height: 18px;
  padding-left: 4px;
  background-color: #fff;
  color: #222;
  white-space: nowrap;
  overflow: hidden;
}
.spin {
  position: absolute;
  right: 0;
  top: 0;
  display: flex;
  flex-direction: column;
  gap: 3px;
  align-items: center;
  justify-content: center;
  width: 12px;
  height: 18px;
  background-color: #e9eaed;
  border-left: 1px solid #c9c9c9;
}
.caret {
  position: absolute;
  right: 4px;
  top: 7px;
  width: 8px;
  height: 5px;
}
.place {
  width: 54px;
  height: 23px;
  padding: 0;
  font: inherit;
  letter-spacing: inherit;
  color: #444;
  background-color: #e6e8ee;
  border: 1px solid #bcc6d8;
  border-radius: 2px;
}
.props-scroll {
  width: 26px;
  padding: 0 0 0 9px;
}
.props-scroll i {
  display: block;
  width: 8px;
  height: 348px;
  background-color: #bbbcbe;
  border-radius: 4px;
}
.sidetabs {
  width: 22px;
  margin-top: 1px;
}
.s-gear {
  display: flex;
  align-items: center;
  justify-content: center;
  height: 18px;
}
.s-tab {
  display: flex;
  align-items: center;
  justify-content: center;
  width: 20px;
  height: 36px;
}
.s-tab.on {
  background-color: #e9eaed;
  border-radius: 0 5px 5px 0;
}
.s-tab svg {
  width: 16px;
  height: 16px;
}

/* osnap */
.osnap {
  background-color: #d8d9dc;
}
.osnap-tabs {
  display: flex;
  align-items: flex-end;
  height: 20px;
  position: relative;
}
.vert {
  position: absolute;
  left: 3px;
  top: 2px;
  width: 17px;
  height: 38px;
  writing-mode: vertical-rl;
  transform: rotate(180deg);
  color: #777;
  font-size: 12px;
  line-height: 17px;
  background-color: #e0e1e4;
}
.os-tab {
  margin-left: 23px;
  padding: 0 9px 0 10px;
  height: 20px;
  line-height: 21px;
  background-color: #e9eaed;
  color: #333;
  border-radius: 5px 5px 0 0;
}
.os-other {
  height: 20px;
  line-height: 21px;
  margin-left: 10px;
  color: #767676;
}
.osnap-row {
  display: grid;
  grid-template-columns: 48px 53px 56px 48px 49px 43px 52px 46px 56px 53px 61px 72px auto;
  align-items: center;
  height: 19px;
  margin-left: 20px;
  padding: 1px 0 0 6px;
  background-color: #e9eaed;
  color: #333;
}
.osnap-row label {
  display: flex;
  align-items: center;
  gap: 5px;
}
.check {
  position: relative;
  display: block;
  width: 13px;
  height: 13px;
  background-color: #fff;
  border: 1px solid #b5b5b5;
}
.check.plain {
  width: 14px;
  height: 14px;
}
.check.on::after {
  content: "";
  position: absolute;
  left: 3px;
  top: 0;
  width: 5px;
  height: 9px;
  border: solid #222;
  border-width: 0 2px 2px 0;
  transform: rotate(40deg);
}

/* status bar */
.status {
  display: flex;
  align-items: center;
  height: 21px;
  padding-bottom: 3px;
  color: #4c4c4c;
  background-color: #e9eaed;
  white-space: nowrap;
}
.status > * {
  flex: none;
}
.st-square {
  width: 12px;
  height: 14px;
  margin-left: 8px;
}
.st-cplane {
  margin-left: 21px;
  width: 129px;
}
.st-coords {
  width: 204px;
}
.st-units {
  width: 83px;
}
.st-swatch {
  width: 15px;
  height: 16px;
  background-color: #000;
  margin-right: 7px;
}
.st-layer {
  width: 177px;
}
.st-grid {
  width: 72px;
}
.st-ortho {
  width: 52px;
}
.st-planar {
  width: 45px;
}
.pill {
  height: 18px;
  line-height: 18px;
  background-color: #d2dcee;
  border-radius: 2px;
  text-align: center;
  color: #333;
  font-weight: 700;
}
.st-osnap {
  width: 51px;
}
.st-smart {
  width: 77px;
  margin-left: 3px;
}
.st-gumball {
  width: 111px;
  margin-left: 5px;
}
.st-lock {
  width: 10px;
  height: 14px;
  margin-left: 8px;
}
.st-auto {
  margin-left: 10px;
  width: 125px;
}
.st-record {
  width: 102px;
}
.st-f {
  margin-left: 10px;
  width: 7px;
}
.st-end {
  width: 16px;
  height: 14px;
}

/* windows taskbar */
.taskbar {
  display: flex;
  align-items: center;
  height: 40px;
  background-color: #1b1b1b;
  color: #fff;
}
.start {
  flex: none;
  width: 16px;
  height: 16px;
  margin-left: 16px;
  margin-right: 17px;
}
.search {
  position: relative;
  display: flex;
  align-items: center;
  flex: none;
  width: 288px;
  height: 40px;
  padding-left: 14px;
  background-color: #f3f3f3;
  color: #222;
  font-size: 14.5px;
  overflow: hidden;
}
.search > svg:first-child {
  width: 16px;
  height: 16px;
  margin-right: 9px;
}
.moon {
  position: absolute;
  right: 0;
  top: 0;
  width: 76px;
  height: 40px;
}
.tb-icon {
  flex: none;
  width: 24px;
  height: 24px;
  margin-left: 25px;
}
.taskview {
  width: 18px;
  height: 18px;
  margin-left: 14px;
  margin-right: 5px;
}
.rhino-btn {
  position: relative;
  display: flex;
  align-items: center;
  justify-content: center;
  flex: none;
  width: 49px;
  height: 40px;
  margin-left: 13px;
  background-color: #3a3a3a;
  border-bottom: 3px solid #76b9ed;
}
.rhino-btn svg {
  width: 24px;
  height: 24px;
}
.rhino-btn em {
  position: absolute;
  right: 13px;
  top: 8px;
  font-size: 10px;
}
.weather {
  display: flex;
  align-items: center;
  flex: none;
  margin-left: 125px;
  font-size: 13px;
  color: #f2f2f2;
  width: 181px;
}
.weather svg {
  width: 26px;
  height: 22px;
  margin-right: 6px;
}
.temp {
  margin-right: 18px;
}
.tray {
  display: flex;
  gap: 11px;
  flex: none;
  align-items: center;
}
.tray svg {
  width: 14px;
  height: 14px;
}
.clock {
  display: flex;
  flex-direction: column;
  align-items: center;
  flex: none;
  width: 66px;
  margin-left: 2px;
  font-size: 12px;
  line-height: 19px;
  color: #f2f2f2;
}
.notify {
  position: relative;
  flex: none;
  width: 20px;
  height: 20px;
  margin-left: 8px;
}
.notify svg {
  width: 18px;
  height: 18px;
}
.notify b {
  position: absolute;
  right: -6px;
  bottom: -5px;
  width: 16px;
  height: 16px;
  line-height: 14px;
  text-align: center;
  border-radius: 50%;
  border: 1px solid #ddd;
  background-color: #333;
  font-size: 10px;
  font-weight: 400;
}
```
